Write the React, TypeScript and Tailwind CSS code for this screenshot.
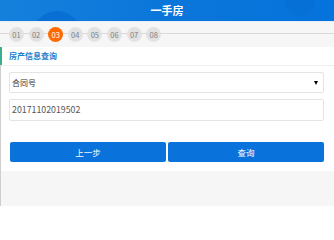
const steps = ['01', '02', '03', '04', '05', '06', '07', '08'];

export default function App() {
  return (
    <div
      className="flex h-[206px] w-[334px] flex-col overflow-hidden bg-[#f6f6f6]"
      style={{ fontFamily: '"Noto Sans CJK SC", "Noto Sans", sans-serif' }}
    >
      {/* header */}
      <div className="relative flex h-[21px] shrink-0 items-center justify-center overflow-hidden bg-gradient-to-r from-[#1580dc] via-[#0b76da] to-[#0573dc]">
        <div className="absolute left-[32px] top-[11px] h-[50px] w-[50px] rounded-full bg-[#0a6fd4]" />
        <div className="absolute left-[285px] top-[-14px] h-[30px] w-[30px] rounded-full bg-[#0670d6]" />
        <span className="relative text-[11px] font-bold leading-none text-white">一手房</span>
      </div>

      {/* steps */}
      <div className="relative flex h-[26px] shrink-0 items-center border-t border-[#e6eef8] bg-[#f6f6f6] pl-[9px]">
        <div className="absolute left-0 right-0 top-[11px] h-px bg-[#d8d8d8]" />
        <div className="relative flex gap-[4.6px]">
          {steps.map((s) => (
            <div
              key={s}
              className={
                s === '03'
                  ? 'flex h-[15px] w-[15px] items-center justify-center rounded-full bg-[#ff6a00] text-[7.5px] leading-none text-white'
                  : 'flex h-[15px] w-[15px] items-center justify-center rounded-full bg-[#e2e2e2] text-[7.5px] leading-none text-[#808080]'
              }
            >
              {s}
            </div>
          ))}
        </div>
      </div>

      {/* form panel */}
      <div className="flex shrink-0 flex-col border-l border-[#cfcfcf] bg-white">
        <div className="relative flex h-[19px] items-center border-b border-[#eeeeee] pl-[8px]">
          <div className="absolute left-[-1px] top-0 h-full w-[2px] bg-[#3bb08f]" />
          <span className="text-[8px] font-bold leading-none text-[#1a7fd0]">房产信息查询</span>
        </div>

        <div className="flex flex-col gap-[6px] pl-[8px] pr-[10px] pt-[6px]">
          <div className="flex h-[21px] items-center justify-between rounded-[2px] border border-[#e4e4e4] pl-[2px] pr-[5px]">
            <span className="text-[8px] leading-none text-[#333]">合同号</span>
            <span className="h-0 w-0 border-x-[2.5px] border-t-[4px] border-x-transparent border-t-black" />
          </div>
          <div className="flex h-[22px] items-center rounded-[2px] border border-[#e4e4e4] pl-[2px]">
            <span className="text-[8.8px] leading-none text-[#555]">20171102019502</span>
          </div>
        </div>

        <div className="flex gap-[2px] pb-[9px] pl-[9px] pr-[10px] pt-[21px]">
          <button className="flex h-[20px] flex-1 items-center justify-center rounded-[2px] bg-[#0a72db] text-[8.5px] leading-none text-white">
            上一步
          </button>
          <button className="flex h-[20px] flex-1 items-center justify-center rounded-[2px] bg-[#0a72db] text-[8.5px] leading-none text-white">
            查询
          </button>
        </div>
      </div>

      <div className="flex-1 border-l border-[#cfcfcf] bg-[#f6f6f6]" />
    </div>
  );
}
